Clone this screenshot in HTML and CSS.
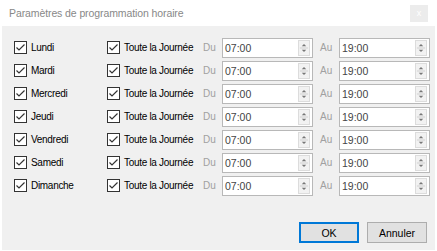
FILE: index.html
```html
<!DOCTYPE html>
<html lang="fr">
<head>
    <meta charset="UTF-8">
    <title>Paramètres de programmation horaire</title>
    <link rel="stylesheet" href="styles.css">
</head>
<body>

<div class="window">
    <div class="titlebar">
        <span class="title">Paramètres de programmation horaire</span>
        <span class="close">x</span>
    </div>

    <div class="content">
        <div class="days" id="days"></div>

        <div class="buttons">
            <button class="btn btn-default">OK</button>
            <button class="btn">Annuler</button>
        </div>
    </div>
</div>

<script>
    var days = ['Lundi', 'Mardi', 'Mercredi', 'Jeudi', 'Vendredi', 'Samedi', 'Dimanche'];

    // Checkbox drawn as svg so it looks like the windows one
    var box = '<svg class="check" width="13" height="13" viewBox="0 0 13 13">' +
              '<rect x="0.5" y="0.5" width="12" height="12" fill="#fff" stroke="#333"/>' +
              '<path d="M2.5 6.5 L5 9 L10.5 3.5" fill="none" stroke="#333" stroke-width="1.2"/></svg>';

    var spin = '<span class="spin"><svg width="11" height="16" viewBox="0 0 11 16">' +
               '<path d="M3 6 L5.5 3.5 L8 6 Z" fill="#777"/>' +
               '<line x1="1" y1="8" x2="10" y2="8" stroke="#ccc"/>' +
               '<path d="M3 10 L5.5 12.5 L8 10 Z" fill="#777"/></svg></span>';

    var html = '';
    days.forEach(function(day) {
        html += '<div class="row">' +
            '<label class="cb day">' + box + '<span>' + day + '</span></label>' +
            '<label class="cb allday">' + box + '<span>Toute la Journée</span></label>' +
            '<span class="lbl">Du</span>' +
            '<span class="time"><span class="val">07:00</span>' + spin + '</span>' +
            '<span class="lbl lbl-au">Au</span>' +
            '<span class="time"><span class="val">19:00</span>' + spin + '</span>' +
            '</div>';
    });
    document.getElementById('days').innerHTML = html;
</script>

</body>
</html>
```

FILE: styles.css
```css
body {
    margin: 0;
    font-family: "Liberation Sans", Arial, sans-serif;
    font-size: 10px;
    color: #000;
    background: #fff;
}
.window {
    width: 437px;
    height: 251px;
    display: flex;
    flex-direction: column;
    background: #fff;
}
.titlebar {
    height: 26px;
    display: flex;
    align-items: center;
    justify-content: space-between;
    padding: 0 9px 0 9px;
}
.title {
    color: #888;
    font-size: 10.5px;
    letter-spacing: -0.1px;
}
.close {
    width: 18px;
    height: 17px;
    background: #ececec;
    color: #fff;
    font-size: 9px;
    display: flex;
    align-items: center;
    justify-content: center;
}
.content {
    flex: 1;
    background: #f0f0f0;
    margin: 0 2px 1px 2px;
    display: flex;
    flex-direction: column;
    justify-content: space-between;
}
.days {
    padding-top: 10px;
}
.row {
    display: flex;
    align-items: center;
    height: 23px;
    white-space: nowrap;
}
.cb {
    display: flex;
    align-items: center;
    letter-spacing: -0.3px;
}
.check {
    display: block;
    margin-right: 4px;
}
.day {
    margin-left: 12px;
    width: 93px;
}
.allday {
    width: 96px;
}
.lbl {
    color: #a0a0a0;
    width: 19px;
}
.lbl-au {
    width: 19px;
    margin-left: 7px;
}
.time {
    width: 89px;
    height: 18px;
    border: 1px solid #b8b8b8;
    background: #fff;
    display: flex;
    align-items: center;
    justify-content: space-between;
    color: #444;
    font-size: 10.5px;
}
.val {
    padding-left: 2px;
}
.spin {
    width: 12px;
    height: 16px;
    margin-right: 2px;
    background: #f2f2f2;
    border: 1px solid #dcdcdc;
    display: flex;
    align-items: center;
    justify-content: center;
    box-sizing: border-box;
}
.buttons {
    display: flex;
    justify-content: flex-end;
    gap: 8px;
    padding: 0 8px 7px 0;
}
.btn {
    width: 60px;
    height: 21px;
    font-family: inherit;
    font-size: 10.5px;
    background: #e1e1e1;
    border: 1px solid #adadad;
    padding: 0;
}
.btn-default {
    border: 2px solid #0078d7;
}
```
